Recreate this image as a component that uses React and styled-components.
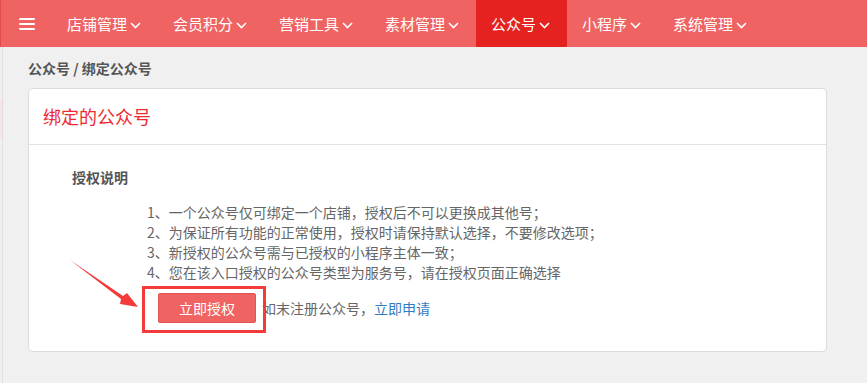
import React from "react"
import styled, { createGlobalStyle } from "styled-components"

const GlobalStyle = createGlobalStyle`
  html, body {
    margin: 0;
    padding: 0;
    background: #f0f0f0;
    font-family: "Noto Sans CJK SC", "Liberation Sans", sans-serif;
  }
  * { box-sizing: border-box; }
`

const NavBar = styled.div`
  display: flex;
  align-items: stretch;
  height: 47px;
  background: #ef6462;
  border-left: 1px solid #e24c4a;
  padding-left: 18px;
`

const Hamburger = styled.div`
  display: flex;
  flex-direction: column;
  justify-content: center;
  gap: 3px;
  width: 16px;
  margin-right: 17px;
  span {
    display: block;
    height: 2px;
    background: #fff;
    border-radius: 1px;
  }
`

const NavItem = styled.div`
  display: flex;
  align-items: center;
  padding: 0 17px 0 15px;
  height: 47px;
  color: #fff;
  font-size: 15px;
  line-height: 47px;
  background: ${p => (p.$active ? "#e5221f" : "transparent")};
  svg {
    margin-left: 3px;
    margin-top: 3px;
  }
`

const Layout = styled.div`
  display: flex;
  min-height: 336px;
`

const SideStrip = styled.div`
  width: 3px;
  border-right: 1px solid #e0e0e0;
  .mark {
    margin-top: 52px;
    height: 40px;
    background: #fbe3e7;
  }
`

const Main = styled.div`
  flex: 1;
  padding: 11px 40px 0 25px;
`

const Crumb = styled.div`
  font-size: 14px;
  font-weight: bold;
  color: #555;
  line-height: 20px;
  margin-bottom: 10px;
`

const Card = styled.div`
  background: #fff;
  border: 1px solid #dcdcdc;
  border-radius: 5px;
`

const CardHead = styled.div`
  height: 56px;
  line-height: 55px;
  padding: 0 14px;
  border-bottom: 1px solid #e2e2e2;
  color: #ee2a30;
  font-size: 18px;
`

const CardBody = styled.div`
  padding: 22px 43px 28px;
`

const SectionTitle = styled.div`
  font-size: 14px;
  font-weight: bold;
  color: #555;
  line-height: 20px;
`

const RuleList = styled.ul`
  list-style: none;
  margin: 15px 0 0 75px;
  padding: 0;
  li {
    font-size: 14px;
    line-height: 20px;
    color: #666;
  }
`

const ActionRow = styled.div`
  position: relative;
  display: flex;
  align-items: center;
  margin: 11px 0 0 86px;
  font-size: 14px;
  color: #666;
`

const AuthButton = styled.button`
  width: 98px;
  height: 30px;
  background: #ef6462;
  border: 1px solid #e05553;
  border-radius: 2px;
  color: #fff;
  font-size: 14px;
  font-family: inherit;
  margin-right: 6px;
  cursor: pointer;
`

const Link = styled.a`
  color: #2f7bc4;
  text-decoration: none;
`

const Highlight = styled.div`
  position: absolute;
  left: -16px;
  top: -7px;
  width: 124px;
  height: 47px;
  border: 3px solid #f43a3a;
  pointer-events: none;
`

const Arrow = styled.svg`
  position: absolute;
  left: -88px;
  top: -33px;
  pointer-events: none;
`

const Chevron = () => (
  <svg width="11" height="7" viewBox="0 0 11 7">
    <path d="M1 1l4.5 4.5L10 1" fill="none" stroke="#fff" strokeWidth="1.6" />
  </svg>
)

const menus = ["店铺管理", "会员积分", "营销工具", "素材管理", "公众号", "小程序", "系统管理"]

const rules = [
  "1、一个公众号仅可绑定一个店铺，授权后不可以更换成其他号；",
  "2、为保证所有功能的正常使用，授权时请保持默认选择，不要修改选项；",
  "3、新授权的公众号需与已授权的小程序主体一致；",
  "4、您在该入口授权的公众号类型为服务号，请在授权页面正确选择",
]

export default function App() {
  return (
    <>
      <GlobalStyle />
      <NavBar>
        <Hamburger>
          <span />
          <span />
          <span />
        </Hamburger>
        {menus.map(m => (
          <NavItem key={m} $active={m === "公众号"}>
            {m}
            <Chevron />
          </NavItem>
        ))}
      </NavBar>
      <Layout>
        <SideStrip>
          <div className="mark" />
        </SideStrip>
        <Main>
          <Crumb>公众号 / 绑定公众号</Crumb>
          <Card>
            <CardHead>绑定的公众号</CardHead>
            <CardBody>
              <SectionTitle>授权说明</SectionTitle>
              <RuleList>
                {rules.map(r => (
                  <li key={r}>{r}</li>
                ))}
              </RuleList>
              <ActionRow>
                <AuthButton>立即授权</AuthButton>
                如末注册公众号，<Link href="#">立即申请</Link>
                <Highlight />
                <Arrow width="70" height="49" viewBox="0 0 70 49">
                  <polygon points="0,0 53,36 57,33 68,47 50,44 51,39" fill="#f43a3a" />
                </Arrow>
              </ActionRow>
            </CardBody>
          </Card>
        </Main>
      </Layout>
    </>
  )
}
